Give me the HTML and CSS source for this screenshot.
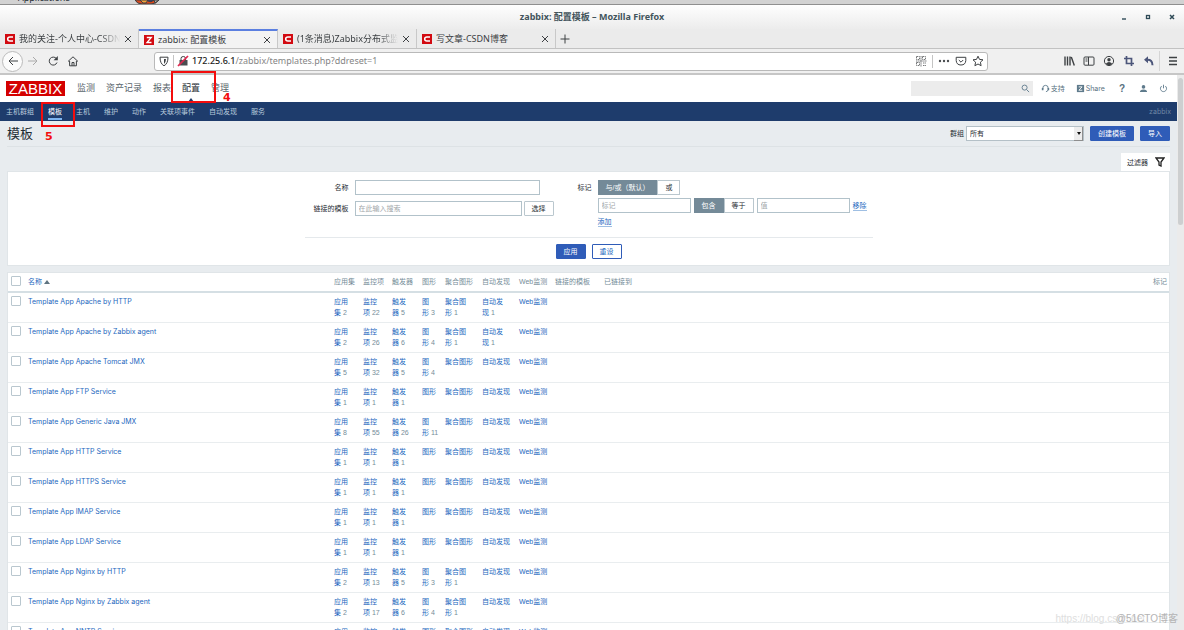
FILE: index.html
```html
<!DOCTYPE html>
<html lang="zh-CN">
<head>
<meta charset="utf-8">
<title>zabbix: 配置模板</title>
<link rel="stylesheet" href="styles.css">
</head>
<body>
<div class="desktop-bar"><span class="desktop-menu">Applications</span>
<svg class="desktop-fox" viewBox="0 0 24 4"><path d="M0 0h24q-3 4-8 4H7Q2 4 0 0z" fill="#d9481c"/><path d="M5 0h8l-2 3H8z" fill="#f4a13a"/><path d="M12 0h7q-3 3-6 1z" fill="#3a3a86"/><path d="M19 0h5l-4 3z" fill="#b5a79a"/></svg></div>
<header class="titlebar"><span class="window-title">zabbix: 配置模板 – Mozilla Firefox</span>
<div class="window-buttons">
<button aria-label="最小化"><svg viewBox="0 0 6 6"><path d="M1 5h4" stroke-width="1.4"/></svg></button>
<button aria-label="最大化"><svg viewBox="0 0 6 6"><rect x="1.5" y="1.5" width="3" height="3" stroke-width="1.3"/></svg></button>
<button aria-label="关闭"><svg viewBox="0 0 6 6"><path d="M1 1l4 4M5 1l-4 4" stroke-width="1.5"/></svg></button>
</div></header>
<div class="tabs">
<div class="tab"><svg class="favicon" viewBox="0 0 10 10"><rect width="10" height="10" fill="#d20a11"/><path d="M8 3H5Q2.700 3 2.700 5T5 7h3" fill="none" stroke="#fff" stroke-width="1.500"/></svg><span class="tab-text fade">我的关注-个人中心-CSDN</span><button class="x" aria-label="关闭标签"><svg viewBox="0 0 8 8"><path d="M1 1l6 6M7 1L1 7"/></svg></button></div>
<div class="tab active"><svg class="favicon" viewBox="0 0 10 10"><rect width="10" height="10" fill="#d20a11"/><path d="M2.800 2.500h4.500L3 7.500h4.500" fill="none" stroke="#fff" stroke-width="1.300"/></svg><span class="tab-text">zabbix: 配置模板</span><button class="x" aria-label="关闭标签"><svg viewBox="0 0 8 8"><path d="M1 1l6 6M7 1L1 7"/></svg></button></div>
<div class="tab"><svg class="favicon" viewBox="0 0 10 10"><rect width="10" height="10" fill="#d20a11"/><path d="M8 3H5Q2.700 3 2.700 5T5 7h3" fill="none" stroke="#fff" stroke-width="1.500"/></svg><span class="tab-text fade">(1条消息)Zabbix分布式监控</span><button class="x" aria-label="关闭标签"><svg viewBox="0 0 8 8"><path d="M1 1l6 6M7 1L1 7"/></svg></button></div>
<div class="tab last"><svg class="favicon" viewBox="0 0 10 10"><rect width="10" height="10" fill="#d20a11"/><path d="M8 3H5Q2.700 3 2.700 5T5 7h3" fill="none" stroke="#fff" stroke-width="1.500"/></svg><span class="tab-text">写文章-CSDN博客</span><button class="x" aria-label="关闭标签"><svg viewBox="0 0 8 8"><path d="M1 1l6 6M7 1L1 7"/></svg></button></div>
<button class="new-tab" aria-label="新标签"><svg viewBox="0 0 10 10"><path d="M5 .5v9M.5 5h9"/></svg></button>
</div>
<div class="toolbar">
<div class="history">
<button class="back" aria-label="后退"><svg viewBox="0 0 12 12"><path d="M11 6H2M6 2L2 6l4 4"/></svg></button>
<button class="forward" aria-label="前进"><svg viewBox="0 0 12 12"><path d="M1 6h9M6 2l4 4-4 4"/></svg></button>
<button aria-label="刷新"><svg viewBox="0 0 12 12"><path d="M10 7.500A4 4 0 1 1 9.300 3.500"/><path d="M10.800 1v4.200H6.600z" fill="#3d4043" stroke="none"/></svg></button>
<button aria-label="主页"><svg viewBox="0 0 12 12"><path d="M1 6.500L6 1.800l5 4.700M2.600 6v4.800h6.800V6M5 10.800V7.500h2v3.300"/></svg></button>
</div>
<div class="urlbar">
<svg viewBox="0 0 12 12"><path d="M2 2.200h8q0 6.500-4 8.600Q2 8.700 2 2.200z"/><path d="M6 4v5q1.800-1.500 2-5z" fill="#3d4043" stroke="none"/></svg>
<i class="sep"></i>
<svg viewBox="0 0 12 12"><rect x="2.500" y="5" width="8" height="5.500" fill="#4a4d50" stroke="none"/><path d="M4 5V3.500q0-2 2.300-2t2.300 2V5"/><path d="M1 11L11 1" stroke="#e22850" stroke-width="1.700"/></svg>
<span class="url"><b>172.25.6.1</b>/zabbix/templates.php?ddreset=1</span>
<div class="page-actions">
<svg class="qr" viewBox="0 0 12 12"><path d="M1.500 1.500h3v3h-3zM7.500 1.500h3v3h-3zM1.500 7.500h3v3h-3zM6 1v11M1 6h11M8 8h3M8 10.500h3" stroke-dasharray="1.500 .6"/></svg>
<i class="sep"></i>
<svg viewBox="0 0 12 12"><g fill="#4a4d50" stroke="none"><circle cx="2" cy="6" r="1.200"/><circle cx="6" cy="6" r="1.200"/><circle cx="10" cy="6" r="1.200"/></g></svg>
<svg viewBox="0 0 12 12"><path d="M1.200 2.300h9.600V5.500Q10.500 10 6 10T1.200 5.500zM3.800 5L6 7.200 8.200 5"/></svg>
<svg viewBox="0 0 12 12"><path d="M6 1.200l1.500 3.200 3.500.4-2.600 2.400.7 3.500L6 9l-3.100 1.700.7-3.500L1 4.800l3.500-.4z"/></svg>
</div>
</div>
<div class="tools">
<button aria-label="书库"><svg viewBox="0 0 12 12"><path d="M2 1.500v9M4.500 1.500v9M7 1.500v9M8.300 2l3 8.500" stroke-width="1.400"/></svg></button>
<button aria-label="侧栏"><svg viewBox="0 0 12 12"><rect x="1" y="2" width="10" height="8.200" rx="1"/><path d="M5.500 2v8M2.500 4h2M2.500 6h2"/></svg></button>
<button aria-label="账户"><svg viewBox="0 0 12 12"><circle cx="6" cy="6" r="4.600"/><circle cx="6" cy="4.700" r="1.700" fill="#3d4043" stroke="none"/><path d="M2.800 8.700Q6 5.500 9.200 8.700 6 12 2.800 8.700z" fill="#3d4043" stroke="none"/></svg></button>
<button aria-label="截图"><svg class="ink" viewBox="0 0 12 12"><path d="M3.500 1v7.500H11M1 3.500h7.500V11" stroke-width="1.700"/></svg></button>
<button aria-label="撤销"><svg class="ink" viewBox="0 0 12 12"><path d="M1 4.800L5 1.300v7z" fill="#4c567a" stroke="none"/><path d="M4 4.800q5.500-.4 5.500 5.500" stroke-width="2"/></svg></button>
<button class="menu" aria-label="菜单"><svg viewBox="0 0 12 12"><path d="M2 2.500h8M2 6h8M2 9.500h8" stroke-width="1.400"/></svg></button>
</div>
</div>
<div class="viewport">
<main class="page">
<header class="site-header">
<a class="logo" href="#">ZABBIX</a>
<nav class="main-menu"><a href="#">监测</a><a href="#">资产记录</a><a href="#">报表</a><a href="#" class="current">配置</a><a href="#">管理</a></nav>
<div class="site-tools">
<div class="search"><input type="text" aria-label="搜索"><svg viewBox="0 0 10 10"><circle cx="4" cy="4" r="2.800"/><path d="M6.200 6.200L9 9"/></svg></div>
<a href="#"><svg viewBox="0 0 10 10"><path d="M2 6V4.500a3 3 0 0 1 6 0V6M7.800 6.500Q7.500 8.500 5.500 8.500"/><path d="M1.800 4.500v2.500M8.200 4.500v2.500" stroke-width="1.800"/></svg>支持</a>
<a href="#" class="share"><svg viewBox="0 0 10 10"><rect x="1" y="1" width="8" height="8" fill="#5f7b8c" stroke="none"/><path d="M3 3.200h3.800L3.200 6.900H7" stroke="#fff"/></svg>Share</a>
<a href="#" class="help">?</a>
<a href="#" aria-label="用户"><svg viewBox="0 0 10 10"><g fill="#5f7b8c" stroke="none"><circle cx="5" cy="3.200" r="2"/><path d="M1 8.800Q1 6 5 6t4 2.800z"/></g></svg></a>
<a href="#" aria-label="退出"><svg viewBox="0 0 10 10"><path d="M3 2.300a3.400 3.400 0 1 0 4 0M5 .8v4"/></svg></a>
</div>
</header>
<nav class="sub-menu"><a href="#">主机群组</a><a href="#" class="current">模板</a><a href="#">主机</a><a href="#">维护</a><a href="#">动作</a><a href="#">关联项事件</a><a href="#">自动发现</a><a href="#">服务</a><span class="server">zabbix</span></nav>
<div class="content">
<div class="heading"><h1>模板</h1>
<div class="actions"><label for="group">群组</label><div class="select"><select id="group"><option>所有</option></select></div><button class="btn primary">创建模板</button><button class="btn primary">导入</button></div></div>
<div class="filter-tab-row"><button class="filter-tab">过滤器<svg viewBox="0 0 10 10"><path d="M1 1h8L6 5v4L4 8V5z"/></svg></button></div>
<form class="filter">
<div class="filter-body">
<div class="filter-left">
<label for="name">名称</label><div class="line"><input id="name" class="name-input" type="text"></div>
<label for="linked">链接的模板</label><div class="line"><input id="linked" class="linked-input" type="text" placeholder="在此输入搜索"><button type="button" class="btn plain">选择</button></div>
</div>
<div class="filter-right">
<span class="label">标记</span>
<div class="tag-lines">
<div class="line"><div class="segment"><button type="button" class="on">与/或（默认）</button><button type="button">或</button></div></div>
<div class="line tag-line"><input type="text" placeholder="标记" aria-label="标记"><div class="segment"><button type="button" class="on">包含</button><button type="button">等于</button></div><input type="text" placeholder="值" aria-label="值"><button type="button" class="link">移除</button></div>
<div><button type="button" class="link">添加</button></div>
</div>
</div>
</div>
<div class="filter-buttons"><button type="button" class="btn primary">应用</button><button type="button" class="btn outline">重设</button></div>
</form>
<table class="list">
<colgroup><col class="c-check"><col class="c-name"><col class="c-count"><col class="c-count"><col class="c-count-wide"><col class="c-graph"><col class="c-screen"><col class="c-screen"><col class="c-web"><col class="c-linked"><col></colgroup>
<thead><tr><th><input type="checkbox" aria-label="全选"></th><th><a href="#">名称<i class="arrow"></i></a></th><th>应用集</th><th>监控项</th><th>触发器</th><th>图形</th><th>聚合图形</th><th>自动发现</th><th>Web监测</th><th>链接的模板</th><th><div class="two-ends"><span>已链接到</span><span>标记</span></div></th></tr></thead>
<tbody id="rows"></tbody>
</table>
</div>
</main>
<div class="scrollbar"><div class="thumb"></div></div>
</div>
<div class="mark mark-config"></div><div class="mark mark-template"></div>
<span class="step step-4">4</span><span class="step step-5">5</span>
<span class="blog-mark">https://blog.csdn.net</span><span class="cto-mark">@51CTO博客</span>
<script src="rows.js"></script>
</body>
</html>
```
FILE: rows.js
```js
const columns = ["应用集", "监控项", "触发器", "图形", "聚合图形", "自动发现", "Web监测"];
const templates = [
  ["Template App Apache by HTTP", 2, 22, 5, 3, 1, 1],
  ["Template App Apache by Zabbix agent", 2, 26, 6, 4, 1, 1],
  ["Template App Apache Tomcat JMX", 5, 32, 5, 4],
  ["Template App FTP Service", 1, 1, 1],
  ["Template App Generic Java JMX", 8, 55, 26, 11],
  ["Template App HTTP Service", 1, 1, 1],
  ["Template App HTTPS Service", 1, 1, 1],
  ["Template App IMAP Service", 1, 1, 1],
  ["Template App LDAP Service", 1, 1, 1],
  ["Template App Nginx by HTTP", 2, 13, 5, 3, 1],
  ["Template App Nginx by Zabbix agent", 2, 17, 6, 4, 1],
  ["Template App NNTP Service", 1, 1, 1]
];
document.getElementById("rows").innerHTML = templates.map(([name, ...counts]) => {
  const cells = columns.map((label, i) =>
    `<td><a href="#">${label}</a>${counts[i] ? `<span class="count">&nbsp;${counts[i]}</span>` : ""}</td>`).join("");
  return `<tr><td><input type="checkbox" aria-label="${name}"></td><td class="name"><a href="#">${name}</a></td>${cells}<td></td><td></td></tr>`;
}).join("");
```
FILE: styles.css
```css
* { box-sizing: border-box; }
body { margin: 0; height: 100vh; overflow: hidden; display: flex; flex-direction: column; position: relative; background: #e8ecef; color: #1f2c33; font: 7px/11px "Liberation Sans", "Noto Sans CJK SC", sans-serif; }
button, input, select { font: inherit; color: inherit; margin: 0; padding: 0; border: 0; background: none; }
a { color: #2367be; text-decoration: none; }
svg { fill: none; stroke: #3d4043; flex: none; display: block; }

.desktop-bar { height: 5px; flex: none; overflow: hidden; background: #d2d2d2; border-bottom: 1px solid #8f8f8f; display: flex; padding-left: 18px; }
.desktop-menu { width: 117px; font: 9px/10px "Noto Sans", sans-serif; margin-top: -7px; }
.desktop-fox { width: 24px; height: 4px; }
.titlebar { height: 24px; flex: none; display: flex; align-items: center; justify-content: center; position: relative; background: linear-gradient(#fefefe, #ececec); color: #42545c; font: bold 9px/12px "Noto Sans", "Noto Sans CJK SC", sans-serif; }
.window-buttons { position: absolute; right: 9px; top: 9px; display: flex; gap: 18px; }
.window-buttons svg { width: 6px; height: 6px; stroke: #2e4a56; }
.tabs { height: 20px; flex: none; display: flex; background: #ebebeb; border-bottom: 1px solid #c2c2c2; font: 9px/12px "Noto Sans", "Noto Sans CJK SC", sans-serif; color: #3c4043; }
.tab { width: 139px; display: flex; align-items: center; gap: 4px; padding: 0 6px 0 5px; border-right: 1px solid #c8c8c8; }
.tab.active { background: #f3f3f3; border-top: 2px solid #5b7fe0; }
.favicon { width: 10px; height: 10px; stroke: none; }
.tab-text { flex: 1; overflow: hidden; white-space: nowrap; }
.fade { mask-image: linear-gradient(to right, #000 80%, transparent); }
.x svg { width: 8px; height: 8px; }
.new-tab { padding: 0 4px; }
.new-tab svg { width: 10px; height: 10px; }
.toolbar { height: 26px; flex: none; display: flex; align-items: center; background: #f0f0f0; border-bottom: 2px solid #c6c6c6; padding: 0 5px 0 2px; }
.toolbar svg { width: 12px; height: 12px; }
.history { display: flex; align-items: center; gap: 8px; width: 152px; flex: none; }
.back { width: 21px; height: 21px; border: 1px solid #bbb; border-radius: 50%; background: #fbfbfb; display: grid; place-items: center; margin-right: -4px; }
.forward svg { stroke: #aaa; }
.urlbar { flex: 1; height: 19px; display: flex; align-items: center; gap: 3px; background: #fff; border: 1px solid #b9b9b9; border-radius: 3px; padding: 0 3px; color: #858585; font: 9px/12px "Noto Sans", sans-serif; }
.url { flex: 1; }
.url b { color: #222; font-weight: 500; }
.page-actions { display: flex; align-items: center; gap: 5px; }
.sep { width: 1px; height: 13px; background: #c4c4c4; }
.qr { opacity: .7; }
.tools { display: flex; align-items: center; gap: 8px; margin-left: 75px; }
.toolbar .ink { stroke: #4c567a; }
.menu { border-left: 1px solid #d5d5d5; padding: 4px 0 4px 7px; margin-left: -4px; }

.viewport { flex: 1; min-height: 0; display: flex; overflow: hidden; }
.page { flex: 1; min-width: 0; }
.scrollbar { width: 7px; background: #ebebeb; padding: 3px 1px; }
.thumb { height: 147px; border-radius: 3px; background: #cdcfd0; }
.site-header { height: 27px; background: #fff; display: flex; align-items: center; padding: 0 9px 0 6px; }
.logo { width: 59px; height: 15px; background: #d40000; color: #fff; font: 15px/15px "Liberation Sans", sans-serif; text-align: center; }
.main-menu { align-self: stretch; display: flex; gap: 11px; margin-left: 12px; font-size: 9px; }
.main-menu a { color: #5a666d; display: flex; align-items: center; position: relative; }
.main-menu .current { color: #1f2c33; }
.main-menu .current::after { content: ""; position: absolute; bottom: 0; left: 6px; border: 3px solid transparent; border-top: 0; border-bottom: 4px solid #1e3b69; }
.site-tools { margin-left: auto; display: flex; align-items: center; gap: 11px; }
.site-tools a { display: flex; align-items: center; gap: 1px; color: #57707e; }
.site-tools svg { width: 9px; height: 9px; stroke: #5f7b8c; }
.search { width: 122px; height: 15px; background: #ececec; display: flex; align-items: center; padding-right: 3px; margin-right: -3px; }
.search input { flex: 1; min-width: 0; }
.help { font-size: 10px; font-weight: bold; padding: 0 3px; }
.sub-menu { height: 19px; background: #1e3c6c; display: flex; align-items: stretch; gap: 14px; padding: 0 6px; line-height: 19px; }
.sub-menu a { color: #b9cbdd; position: relative; }
.sub-menu .current { color: #fff; }
.sub-menu .current::after { content: ""; position: absolute; left: 0; right: 0; bottom: 1px; height: 2px; background: #7db4f0; }
.server { margin-left: auto; color: #6f87a4; }
.sub-menu .server, .share, .name { font-family: Inter, "Noto Sans CJK SC", sans-serif; }

.content { padding: 0 7px; }
.heading { height: 26px; display: flex; align-items: center; justify-content: space-between; border-bottom: 1px solid #dde2e5; margin-bottom: 6px; }
h1 { margin: 0; font-size: 13px; line-height: 16px; font-weight: normal; }
.actions { display: flex; align-items: center; gap: 6px; }
.actions label { margin-right: -4px; }
.select { position: relative; width: 118px; height: 15px; background: #fff; border: 1px solid #b4c0c7; }
.select select { appearance: none; display: block; width: 100%; height: 13px; padding: 0 3px; }
.select::before { content: ""; position: absolute; right: 0; top: 0; width: 8px; height: 13px; background: #ededed; border-right: 1px solid #8e8e8e; border-bottom: 1px solid #8e8e8e; pointer-events: none; }
.select::after { content: ""; position: absolute; right: 2px; top: 5px; border: 2px solid transparent; border-top: 3px solid #111; border-bottom: 0; pointer-events: none; }
.btn { height: 15px; padding: 0 7px; border: 1px solid #2f5cb8; border-radius: 1px; white-space: nowrap; }
.primary { background: #2f5cb8; color: #fff; }
.outline { background: #fff; color: #2367be; }
.plain { background: #fff; border-color: #bac7ce; }
.filter-tab-row { display: flex; justify-content: flex-end; }
.filter-tab { height: 18px; background: #fff; display: flex; align-items: center; gap: 7px; padding: 0 5px 0 6px; }
.filter-tab svg { width: 10px; height: 10px; stroke: #222; stroke-width: 1.300; }
.filter { background: #fff; border: 1px solid #e0e5e8; padding: 8px 0 6px; margin-bottom: 6px; }
.filter-body { width: 568px; margin: 0 auto; display: flex; border-bottom: 1px solid #e5e9ec; height: 58px; }
.filter-left { display: grid; grid-template-columns: 44px 1fr; column-gap: 6px; row-gap: 6px; align-content: start; text-align: right; align-items: center; width: 248px; }
.line { display: flex; gap: 2px; }
.filter input[type="text"] { height: 15px; background: #fff; border: 1px solid #b2c2ca; padding: 0 3px; }
.filter ::placeholder { color: #a2a7aa; opacity: 1; }
.name-input { width: 185px; }
.linked-input { width: 167px; }
.filter-right { display: flex; gap: 6px; margin-left: 25px; }
.label { line-height: 15px; }
.tag-lines { display: flex; flex-direction: column; gap: 3px; }
.tag-line { gap: 3px; }
.tag-line input { width: 93px; }
.segment { display: flex; }
.segment button { height: 15px; border: 1px solid #bac7ce; padding: 0 7px; background: #fff; }
.segment .on { background: #748a98; border-color: #748a98; color: #fff; }
.link { color: #2367be; border-bottom: 1px solid #9fbfe3; line-height: 9px; align-self: center; }
.filter-buttons { display: flex; justify-content: center; gap: 6px; padding-top: 6px; }

.list { width: 100%; table-layout: fixed; border-collapse: separate; border-spacing: 0; background: #fff; border: 1px solid #e0e5e8; }
.c-check { width: 20px; } .c-name { width: 306px; } .c-count { width: 29px; } .c-count-wide { width: 30px; } .c-graph { width: 23px; } .c-screen { width: 37px; } .c-web { width: 36px; } .c-linked { width: 49px; }
.list th, .list td { text-align: left; vertical-align: top; font-weight: normal; padding: 3px 7px 4px 0; border-bottom: 1px solid #e9edef; }
.list th { color: #768d99; border-bottom: 2px solid #d5dfe4; white-space: nowrap; padding-right: 0; }
.list th:first-child, .list td:first-child { padding: 3px 0 0 3px; }
.list input { appearance: none; display: block; width: 10px; height: 10px; border: 1px solid #b9c7cf; border-radius: 1px; background: #fff; }
.list td:nth-child(6) { padding-right: 5px; }
.list td:nth-child(9) { padding-right: 0; white-space: nowrap; }
.arrow { display: inline-block; margin-left: 2px; border: 3px solid transparent; border-top: 0; border-bottom: 4px solid #5f7480; }
.two-ends { display: flex; justify-content: space-between; padding-right: 2px; }
.count { color: #768d99; }

.mark { position: absolute; border: 2px solid #f30d0d; }
.mark-config { left: 171px; top: 71px; width: 45px; height: 32px; }
.mark-template { left: 41px; top: 102px; width: 34px; height: 25px; }
.step { position: absolute; color: #f30d0d; font: bold 11px/12px "DejaVu Sans", sans-serif; }
.step-4 { left: 223px; top: 92px; }
.step-5 { left: 45px; top: 131px; }
.blog-mark { position: absolute; right: 39px; bottom: 5px; color: #dedede; font-size: 10px; line-height: 12px; }
.cto-mark { position: absolute; right: 6px; bottom: 5px; color: #b4b4b4; font-size: 10px; line-height: 12px; }
```
